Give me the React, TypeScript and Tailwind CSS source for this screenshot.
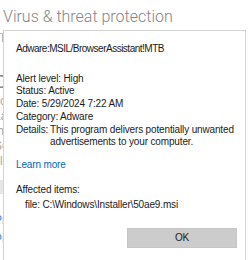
const font = { fontFamily: '"Liberation Sans", Arial, sans-serif' };

export default function App() {
  return (
    <div className="relative h-[260px] w-[250px] overflow-hidden bg-white" style={font}>
      {/* page behind the dialog */}
      <h1
        className="pl-[3px] pt-[7px] text-[16px] font-light leading-[20px] text-[#858585]"
        style={{ fontFamily: 'Roboto, "Liberation Sans", sans-serif' }}
      >
        Virus &amp; threat protection
      </h1>
      <div className="w-[3px] overflow-hidden">
        <div className="-ml-[6px] flex flex-col text-[12px] leading-[13px] text-[#a8a8a8]">
          <span className="mt-[5px]">Threats</span>
          <span className="mt-[27px] text-[18px] leading-[20px] text-[#888]">Cur</span>
          <span className="mt-[3px]">scan</span>
          <span className="mt-[2px]">Last</span>
          <span className="mt-[2px]">threats</span>
          <span className="mt-[2px]">Scan</span>
          <span className="mt-[2px]">files</span>
          <span className="mt-[12px] h-[14px] w-[12px] bg-[#e6e6e6]" />
          <span className="mt-[20px] text-[#3c8fd6]">Prov</span>
          <span className="mt-[6px] text-[#3c8fd6]">Prev</span>
        </div>
      </div>

      {/* dialog */}
      <div className="absolute left-[3px] top-[30px] h-[240px] w-[243px] border border-[#d4d4d4] bg-white pl-[12px] pt-[11.5px] text-[10px] leading-[12.7px] tracking-[-0.15px] text-[#1b1b1b]">
        <p className="tracking-[-0.5px]">Adware:MSIL/BrowserAssistant!MTB</p>
        <div className="mt-[17.5px] flex flex-col">
          <p>Alert level: High</p>
          <p>Status: Active</p>
          <p>Date: 5/29/2024 7:22 AM</p>
          <p>Category: Adware</p>
          <div className="flex">
            <span className="w-[34px] shrink-0">Details:</span>
            <span className="flex flex-col whitespace-nowrap">
              <span>This program delivers potentially unwanted</span>
              <span>advertisements to your computer.</span>
            </span>
          </div>
        </div>
        <p className="mt-[10.5px] text-[#0067b8]">Learn more</p>
        <p className="mt-[12px]">Affected items:</p>
        <p className="mt-[2px] pl-[9px]">file: C:\Windows\Installer\50ae9.msi</p>
        <div className="mt-[16.5px] flex justify-end pr-[8px]">
          <button className="flex h-[20px] w-[110px] items-center justify-center border border-[#c6c6c6] bg-[#cccccc] text-[10px] text-[#1b1b1b]">
            OK
          </button>
        </div>
      </div>
    </div>
  );
}
